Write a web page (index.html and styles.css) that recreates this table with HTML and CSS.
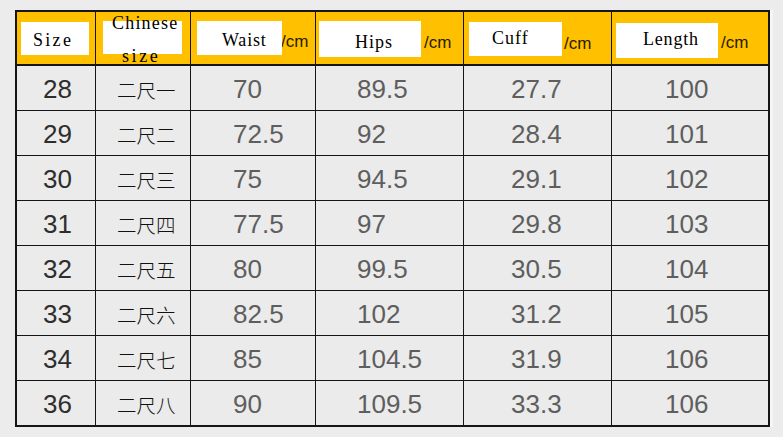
FILE: index.html
```html
<!DOCTYPE html>
<html>
<head>
<meta charset="utf-8">
<link rel="stylesheet" href="styles.css">
</head>
<body>
<div class="chart">
  <div class="hd hd-size"><div class="box"><span class="lbl">Size</span></div></div>
  <div class="hd hd-cn"><div class="box"><span class="lbl"><span class="w-cn">Chinese</span><br><span class="w-sz">size</span></span></div></div>
  <div class="hd hd-waist"><div class="box"><span class="lbl">Waist</span></div><span class="unit">/cm</span></div>
  <div class="hd hd-hips"><div class="box"><span class="lbl">Hips</span></div><span class="unit">/cm</span></div>
  <div class="hd hd-cuff"><div class="box"><span class="lbl">Cuff</span></div><span class="unit">/cm</span></div>
  <div class="hd hd-len"><div class="box"><span class="lbl">Length</span></div><span class="unit">/cm</span></div>

  <div class="c c1">28</div><div class="c c2">二尺一</div><div class="c c3">70</div><div class="c c4">89.5</div><div class="c c5">27.7</div><div class="c c6">100</div>
  <div class="c c1">29</div><div class="c c2">二尺二</div><div class="c c3">72.5</div><div class="c c4">92</div><div class="c c5">28.4</div><div class="c c6">101</div>
  <div class="c c1">30</div><div class="c c2">二尺三</div><div class="c c3">75</div><div class="c c4">94.5</div><div class="c c5">29.1</div><div class="c c6">102</div>
  <div class="c c1">31</div><div class="c c2">二尺四</div><div class="c c3">77.5</div><div class="c c4">97</div><div class="c c5">29.8</div><div class="c c6">103</div>
  <div class="c c1">32</div><div class="c c2">二尺五</div><div class="c c3">80</div><div class="c c4">99.5</div><div class="c c5">30.5</div><div class="c c6">104</div>
  <div class="c c1">33</div><div class="c c2">二尺六</div><div class="c c3">82.5</div><div class="c c4">102</div><div class="c c5">31.2</div><div class="c c6">105</div>
  <div class="c c1">34</div><div class="c c2">二尺七</div><div class="c c3">85</div><div class="c c4">104.5</div><div class="c c5">31.9</div><div class="c c6">106</div>
  <div class="c c1 last">36</div><div class="c c2 last">二尺八</div><div class="c c3 last">90</div><div class="c c4 last">109.5</div><div class="c c5 last">33.3</div><div class="c c6 last">106</div>
</div>
</body>
</html>
```
FILE: styles.css
```css
* { box-sizing: border-box; }
html, body { margin: 0; padding: 0; }
body {
  background: #ececec;
  width: 783px;
  height: 437px;
  overflow: hidden;
  padding: 10px 0 0 15px;
}
.chart {
  display: grid;
  grid-template-columns: 79px 95px 125px 148px 148px 156px;
  grid-template-rows: 54px repeat(7, 45px) 44px;
  width: 755px;
  border: 2px solid #151515;
  background: #ebebeb;
  box-shadow: 2px 0 0 #f6f6f6, 3px 0 0 #f3f3f3;
}
.hd {
  background: #ffc000;
  border-right: 1px solid #151515;
  border-bottom: 2px solid #151515;
  display: flex;
  align-items: flex-start;
}
.hd-len { border-right: none; }
.box {
  background: #fff;
  display: flex;
  align-items: center;
  flex: none;
  position: relative;
  z-index: 1;
}
.lbl {
  font-family: "Liberation Serif", "DejaVu Serif", serif;
  font-size: 18px;
  line-height: 18px;
  letter-spacing: 1px;
  color: #000;
  white-space: nowrap;
}
.unit {
  font-family: "Liberation Sans", Arial, sans-serif;
  font-size: 17px;
  line-height: 17px;
  color: #2a1c00;
  margin-top: 22px;
}
.hd-size .box { margin: 10px 0 0 4px; width: 68px; height: 33px; padding: 3px 0 0 12px; }
.hd-size .lbl { letter-spacing: 2.3px; }
.hd-cn .box { margin: 9px 0 0 7px; width: 79px; height: 33px; padding-left: 9px; }
.hd-cn .lbl { line-height: 33px; margin-top: 4px; }
.w-cn { letter-spacing: 1.2px; }
.w-sz { letter-spacing: 2.6px; margin-left: 10px; }
.hd-waist .box { margin: 9px 0 0 6px; width: 85px; height: 34px; padding: 4px 0 0 25px; }
.hd-waist .lbl { letter-spacing: 0.8px; }
.hd-waist .unit { margin-left: -1px; margin-top: 21px; }
.hd-hips .box { margin: 9px 0 0 3px; width: 102px; height: 36px; padding: 5px 0 0 36px; }
.hd-hips .unit { margin-left: 3px; margin-top: 22px; }
.hd-cuff .box { margin: 10px 0 0 5px; width: 93px; height: 34px; padding: 0 0 2px 23px; }
.hd-cuff .unit { margin-left: 2px; margin-top: 23px; }
.hd-len .box { margin: 11px 0 0 4px; width: 102px; height: 35px; padding: 0 0 3px 27px; }
.hd-len .lbl { letter-spacing: 0.8px; }
.hd-len .unit { margin-left: 3px; margin-top: 22px; }

.c {
  border-right: 1px solid #151515;
  border-bottom: 1px solid #151515;
  display: flex;
  align-items: center;
  padding-top: 3px;
  font-family: "Liberation Sans", Arial, sans-serif;
  font-size: 26px;
  color: #5e5e5e;
  white-space: nowrap;
}
.c.last { border-bottom: none; }
.c6 { border-right: none; padding-left: 53px; }
.c1 { padding-left: 26px; color: #2e2e2e; }
.c2 {
  padding-left: 21px;
  color: #111;
  font-family: "Noto Sans CJK SC", "Noto Sans", sans-serif;
  font-size: 19.5px;
  font-weight: 300;
}
.c3 { padding-left: 42px; }
.c4 { padding-left: 41px; }
.c5 { padding-left: 47px; }
```
